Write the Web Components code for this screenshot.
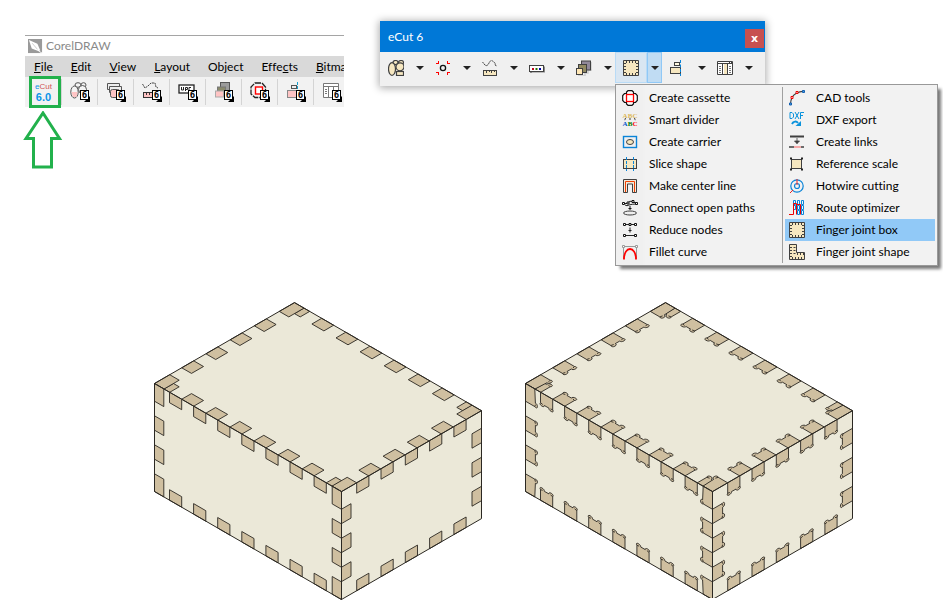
<!DOCTYPE html>
<html lang="en">
<head>
<meta charset="utf-8">
<title>eCut 6 finger joint box</title>
<style>
body{margin:0;background:#fff;color:#000;font:12px/16px Lato,"Open Sans",sans-serif;font-variant-ligatures:none}
</style>
</head>
<body>
<ecut-page></ecut-page>
<script>
const C='#f6e7c0', K='#404040', B='#0a84d8';
const ICONS={
 nest:`<g fill="${C}" stroke="${K}" stroke-width="1.2"><ellipse cx="7.5" cy="2.5" rx="2.5" ry="2"/><ellipse cx="13" cy="2.5" rx="2.5" ry="2"/><ellipse cx="4" cy="9" rx="3.5" ry="6.3"/><circle cx="12" cy="6.8" r="4"/><rect x="8.5" y="11.5" width="7" height="4"/></g>`,
 focus:`<path d="M1 3.5h2.5V1M12.500 1v2.500H15M1 12.500h2.500V15M15 12.500h-2.500V15" fill="none" stroke="red" shape-rendering="crispEdges"/><circle cx="8" cy="8" r="2.600" fill="none" stroke="#111" stroke-width="1.300"/>`,
 measure:`<path d="M.5 2L3 5Q5 7 7 3T11 1.500Q14 3 13 5L15 6" fill="none" stroke="${K}" stroke-dasharray="2 .6"/><rect x="1.500" y="10.500" width="13" height="5" fill="${C}" stroke="${K}"/><path d="M4.500 11v2M7.500 11v1M9.500 11v2M12.500 11v1" stroke="${K}"/>`,
 dots:`<path d="M2 13V11.500H15.500V6.500" fill="none" stroke="#888" stroke-width="2"/><rect x=".5" y="5.500" width="14" height="6" fill="#fff" stroke="${K}"/><path d="M3 8h2v2H3z" fill="#c00020"/><path d="M6.500 8h2v2h-2z" fill="#2a7000"/><path d="M10 8h2v2h-2z" fill="#00a"/>`,
 stack:`<path d="M2 16H9V13H12V10H16V2" fill="none" stroke="#ccc" stroke-width="1.500"/><rect x="5.500" y="1" width="9" height="9" fill="#91899a" stroke="${K}"/><rect x="2.500" y="4.500" width="8" height="8" fill="#918a62" stroke="${K}"/><rect x=".5" y="8.500" width="6" height="6" fill="#ffe7b5" stroke="${K}"/>`,
 finger:`<path d="M.5.5h15v15H.5z" fill="${C}" stroke="${K}"/><g fill="none" stroke="${K}" stroke-dasharray="1 2" stroke-width="2"><path d="M3 2H14M3 14H14M2 3V14M14 3V14"/></g>`,
 align:`<rect x="4.500" y="2.500" width="5" height="3" fill="#fff8e0" stroke="${K}"/><rect x=".5" y="7.500" width="10" height="6" fill="${C}" stroke="${K}"/><path d="M10.500 0V16" stroke="${B}" stroke-dasharray="3 1.500"/>`,
 table:`<path d="M.5 1.500h15v13H.5zM0 3.500h16M5.500 4v10M10.500 4v10" fill="#fff" stroke="${K}"/><path d="M7 4h3v10H7z" fill="${C}"/><path d="M12 2.500h3" stroke="${K}" stroke-dasharray="1 1"/><path d="M2 6.500h2M2 8.500h2M2 10.500h2M2 12.500h2M12 6.500h2M12 8.500h2M12 10.500h2M12 12.500h2" stroke="#777"/>`,
 cassette:`<path d="M4.500.7H11.500V4.500H15.300V11.500H11.500V15.300H4.500V11.500H.7V4.500H4.500z" fill="#fff"/><path d="M4.500 3.500V2L6 .7H10L11.500 2V3.500H13.500L15.300 5.500V10.500L13.500 12.500H11.500V14L10 15.300H6L4.500 14V12.500H2.500L.7 10.500V5.500L2.500 3.500z" fill="none" stroke="#111" stroke-width="1.200"/><rect x="4.500" y="4.500" width="7" height="7" fill="#fff" stroke="red" stroke-width="1.300"/>`,
 divider:`<g font-family="Liberation Serif,serif" font-weight="700" font-size="7" text-anchor="middle"><text x="3" y="5.500" fill="#dcb85c">A</text><text x="8" y="5.500" fill="#dcb85c">B</text><text x="13" y="5.500" fill="#dcb85c">C</text><text x="3" y="14" fill="#05c">A</text><text x="8" y="14" fill="#070">B</text><text x="13" y="14" fill="red">C</text></g><path d="M3.500 6L2.500 9M8 6V9M12.500 6L13.500 9" stroke="${K}" stroke-dasharray="2 1"/>`,
 carrier:`<rect x="1.500" y="2.500" width="13" height="11" fill="none" stroke="${B}" stroke-width="1.400"/><ellipse cx="8" cy="8" rx="3.500" ry="2.500" fill="${C}" stroke="${K}"/>`,
 slice:`<rect x="1.500" y="3.500" width="13" height="9" fill="${C}" stroke="${K}"/><path d="M4.500 1V15M11.500 1V15" stroke="${B}" stroke-dasharray="3 1"/>`,
 center:`<path d="M1.500 14.500V1.500H14.500V14.500H10.500V6H5.500V14.500z" fill="#f4e8d8" stroke="${K}"/><path d="M3.500 14V3.500H12.500V14" fill="none" stroke="#f04000"/>`,
 connect:`<path d="M1 3.500H5M11 2.500H15M5 3.500Q8 0 10.500 1.500M3 5Q5 6.500 7 5Q10 4 14 4" fill="none" stroke="#222"/><path d="M.5 2.500h2v2h-2zM5 2h2v2H5zM10 .5h2v2h-2zM13.500 2.500h2v2h-2z" fill="#fff" stroke="#111"/><path d="M8 6v4M6.500 8.500h3" stroke="#111"/><ellipse cx="8" cy="13" rx="6.500" ry="2" fill="#eee" stroke="${K}"/>`,
 reduce:`<path d="M2 2.500H14M2 13.500H14M8 5.500v5M6.500 8.500h3" stroke="#222"/><path d="M1.500 1.500h2v2h-2zM7 1.500h2v2H7zM12.500 1.500h2v2h-2zM1.500 12.500h2v2h-2zM12.500 12.500h2v2h-2z" fill="#fff" stroke="#111"/>`,
 fillet:`<path d="M1.500 15V2.500H14.500V15" fill="none" stroke="#999"/><path d="M.5 1.500h2v2h-2zM13.500 1.500h2v2h-2z" fill="#fff" stroke="#999"/><path d="M2 15.500C2 1.500 14 1.500 14 15.500" fill="none" stroke="red" stroke-width="1.800"/>`,
 cad:`<path d="M1.500 14Q2 6 7 3.500T15 1.500" fill="none" stroke="${K}" stroke-width="1.200"/><path d="M.5 13h2v2h-2zM13.500.5h2v2h-2z" fill="#4aa0e8" stroke="#1560b0"/><path d="M2 6.500h2v2H2zM7 1.500h2v2H7z" fill="#fff" stroke="#e00"/>`,
 dxf:`<path d="M1 .5V6.500H3L4.500 5V2L3 .5zM6 0L10 7M10 0L6 7M11.500 7V.5H15M11.500 3.500H14" fill="none" stroke="#0b93dc"/><path d="M3 12C4.500 9 7.500 9 9 11" fill="none" stroke="#0b93dc" stroke-width="2"/><path d="M12 9v5H6.500z" fill="#0b93dc"/>`,
 links:`<path d="M1 2.500H15" stroke="${K}" stroke-width="2"/><path d="M8 4v6M5.500 7h5L8 9.500z" fill="${K}" stroke="${K}" stroke-width=".8"/><path d="M0 13H5M12 13H15" stroke="${K}" stroke-width="1.600"/><path d="M5.500 13H12" stroke="#f33" stroke-width="1.500" stroke-dasharray="1 1"/>`,
 scale:`<rect x="2.500" y="3.500" width="10" height="9" fill="${C}" stroke="${K}"/><path d="M1 2.500h2M12 2.500h2M1 13.500h2M12 13.500h2" stroke="#222" stroke-width="2"/>`,
 hotwire:`<circle cx="8" cy="8" r="6.200" fill="none" stroke="${B}" stroke-width="1.200"/><circle cx="8" cy="8" r="2.500" fill="none" stroke="${B}" stroke-width="1.200"/><path d="M8 1V7M1 15L4 12" stroke="#e22"/>`,
 route:`<path d="M4.500.500h2v4h-2zM8.500.500h2v4h-2zM12.500.500h2v4h-2zM4.500 5.500h2v4h-2zM8.500 5.500h2v4h-2zM12.500 5.500h2v4h-2zM8.500 10.500h2v4h-2zM12.500 10.500h2v4h-2z" fill="#eff8ff" stroke="${B}"/><path d="M0 14.500H4.500V3.500H7.500V14.500M7.500 4.500H11.500V14.500" fill="none" stroke="#e00"/>`,
 shape:`<path d="M.5.5H7.500V8.500H15.500V15.500H.5z" fill="${C}" stroke="${K}"/><path d="M2 3V14M5.500 3V10M3 14H15M8 10H15" fill="none" stroke="${K}" stroke-width="2" stroke-dasharray="1 2"/>`,
 logo:`<path d="M0 0H15V15H0z" fill="#9a9a9a"/><path d="M1 1L10 5L13 12L11.500 13L4 10z" fill="#fff"/><path d="M4.500 4.500L10 11" stroke="#9a9a9a" stroke-width=".5"/><path d="M11.500 13L15 15" stroke="#fff"/>`
};
const P='#ffc4c4', badge=`<path d="M20 14v6h-6z" fill="#000"/><rect x="10.500" y="8.500" width="8" height="9" fill="#fff" stroke="#000"/><text x="14.500" y="16" text-anchor="middle" font-family="DejaVu Sans Mono,monospace" font-weight="700" font-size="9">6</text>`;
const CDR={
 nest:`<g fill="#f4f4f4" stroke="#555"><ellipse cx="8" cy="3" rx="3" ry="2.300"/><ellipse cx="13.500" cy="3" rx="2.500" ry="2.300"/><ellipse cx="4.500" cy="10" rx="3.700" ry="6"/><circle cx="12.500" cy="7.500" r="4"/></g><path d="M1.500 10h6l-1 5H3z" fill="${P}"/>`,
 copies:`<g fill="#eee" stroke="#555"><path d="M1.500 1.500h12v6h-12z"/><path d="M3.500 4.500h12v6h-12z"/><rect x="4.500" y="7.500" width="9" height="8" rx="2" fill="${P}"/></g>`,
 measure:`<path d="M.5 2L3 6L6 4L9 1L13 1L14 5L16 6" fill="none" stroke="#444" stroke-dasharray="2 .7"/><rect x="1.500" y="10.500" width="12" height="5" fill="${P}" stroke="#333"/><path d="M4.500 11v2M7.500 11v2" stroke="#333"/>`,
 vcc:`<rect x="1" y="3" width="15" height="8" fill="#fff" stroke="#222" stroke-width="1.300"/><path d="M3.500 5v3h2V5M7.500 9V5.500h2v2h-2M13 5.500h-2v3" fill="none" stroke="#222"/>`,
 stack:`<rect x="6.500" y=".5" width="9" height="9" fill="#9b9b9b" stroke="#555"/><rect x="3.500" y="5" width="8" height="7" fill="#89896a" stroke="#777"/><rect x="1.500" y="9" width="8" height="6" fill="${P}" stroke="#aaa"/>`,
 cassette:`<path d="M5 1H12L15.500 5V12L12 15.500H5L1 12V5z" fill="none" stroke="#222" stroke-width="1.300" stroke-dasharray="6 1"/><rect x="5.500" y="5" width="7" height="7" fill="#fff" stroke="red" stroke-width="1.400"/>`,
 align:`<rect x="5.500" y="3.500" width="5" height="3" fill="#eee" stroke="#555"/><rect x="1.500" y="8.500" width="10" height="7" fill="${P}" stroke="#888"/><path d="M11.500 0V16" stroke="#18a0d0" stroke-dasharray="3 1"/>`,
 table:`<path d="M1.500 1.500h15v14h-15zM1 4.500h16M6.500 4v11M11.500 4v11" fill="#fff" stroke="#777"/><path d="M3 7.500h2M3 9.500h2M3 11.500h2" stroke="#777"/>`
};
const define=(name,html,init)=>customElements.define(name,class extends HTMLElement{
  constructor(){super();const t=document.createElement('template');t.innerHTML=html;this.attachShadow({mode:'open'}).append(t.content.cloneNode(true));}
  connectedCallback(){if(init&&!this.ready){this.ready=true;init(this,this.shadowRoot);}}
});

define('ui-icon',`<style>:host{display:block;width:16px;height:16px;flex:none}:host([set=cdr]){width:20px;height:20px}svg{display:block;width:100%;height:100%}</style><svg aria-hidden="true"></svg>`,(h,r)=>{
  const cdr=h.getAttribute('set')==='cdr', s=r.querySelector('svg'), n=h.getAttribute('name');
  s.setAttribute('viewBox',cdr?'0 0 20 20':'0 0 16 16');
  s.innerHTML=cdr?CDR[n]+badge:ICONS[n];
});

define('cdr-window',`<style>
:host{display:block;overflow:hidden}
header{display:flex;align-items:center;gap:3px;height:20px;padding-left:3px;border-top:1px solid #a5a5a5;color:#8a8a8a;background:#fff}
header ui-icon{width:15px;height:15px}
nav{display:flex;gap:18px;height:21px;padding-left:9px;background:#d9d9d9;align-items:center}
button{font:inherit;color:inherit;border:0;padding:0;background:none;white-space:nowrap}
.bar{display:flex;height:30px;background:#f2f2f2;padding-left:1px}
.bar button{flex:0 0 36px;box-sizing:border-box;border-right:1px solid #d4d4d4;display:grid;place-items:center;margin:2px 0}
.brand{display:block;font:8px/9px "Liberation Sans",sans-serif;color:#d05555}
.brand span{display:block}
.brand i{color:#0a95e8;font-style:normal}
.brand b{display:block;color:#0a95e8;font:bold 11px/12px "Liberation Sans",sans-serif}
</style>
<header><ui-icon name="logo"></ui-icon><span>CorelDRAW</span></header>
<nav><button><u>F</u>ile</button><button><u>E</u>dit</button><button><u>V</u>iew</button><button><u>L</u>ayout</button><button>Ob<u>j</u>ect</button><button>Effe<u>c</u>ts</button><button><u>B</u>itmap</button></nav>
<div class="bar"><button><span class="brand"><span><i>e</i>Cut</span><b>6.0</b></span></button></div>`,(h,r)=>{
  const bar=r.querySelector('.bar');
  for(const n of ['nest','copies','measure','vcc','stack','cassette','align','table']){
    const b=document.createElement('button');b.setAttribute('aria-label',n);b.innerHTML=`<ui-icon set="cdr" name="${n}"></ui-icon>`;bar.append(b);
  }
});

define('callout-arrow',`<style>:host{display:block}.box{box-sizing:border-box;width:32px;height:32px;border:3px solid #22b14c;margin-left:6px}svg{display:block;width:40px;height:58px;margin-top:3px}</style>
<div class="box"></div><svg viewBox="0 0 40 58"><path d="M20 2L36.500 27.500H28.500V56H10.500V27.500H3z" fill="none" stroke="#22b14c" stroke-width="3"/></svg>`);

define('menu-entry',`<style>
:host{display:block}
button{display:flex;align-items:center;gap:11px;width:100%;height:22px;border:0;background:none;padding:0 4px;font:inherit;color:inherit;text-align:left;white-space:nowrap}
:host([active]) button{background:#91c9f7}
</style><button role="menuitem"><ui-icon></ui-icon><slot></slot></button>`,(h,r)=>{
  const i=document.createElement('ui-icon');i.setAttribute('name',h.getAttribute('icon'));r.querySelector('ui-icon').replaceWith(i);
});

define('drop-menu',`<style>
:host{display:grid;grid-template-columns:165px 150px;gap:2px;padding:2px;box-sizing:border-box;background:linear-gradient(90deg,#f0f0f0 26px,#f2f2f2 30px);border:1px solid #999;box-shadow:4px 4px 3px -1px #0008}
.l{border-right:1px solid #a0a0a0}
</style><div class="l"><slot name="left"></slot></div><div><slot></slot></div>`);

define('split-button',`<style>
:host{display:flex;position:relative;height:31px;flex:0 0 47px}
button{font:inherit;border:0;background:none;padding:0;display:grid;place-items:center;box-sizing:border-box}
.main{width:32px}.more{width:15px}
.more::before{content:"";border:4px solid transparent;border-top-color:#222;border-bottom:0}
:host([open]) .main{background:#d9e6f2;border:1px solid #b9dbf6}
:host([open]) .more{background:#c0dcf3;border:1px solid #90c8f6}
::slotted(drop-menu){position:absolute;left:0;top:32px;z-index:2}
</style><button class="main"><ui-icon></ui-icon></button><button class="more" aria-label="More"></button><slot></slot>`,(h,r)=>{
  const i=document.createElement('ui-icon');i.setAttribute('name',h.getAttribute('icon'));r.querySelector('ui-icon').replaceWith(i);
  r.querySelector('.main').setAttribute('aria-label',h.getAttribute('icon'));
});

define('tool-palette',`<style>
:host{display:block;background:#f0f0f0;box-shadow:0 1px 8px 1px #0005}
header{display:flex;align-items:center;justify-content:space-between;height:31px;padding:0 1px 0 8px;background:#0078d7;color:#fff}
header button{width:19px;height:19px;margin-top:4px;border:0;padding:0;background:#c75050;color:#fff;font:bold 11px/16px "DejaVu Sans",sans-serif}
.row{display:flex;height:34px}
</style><header><span>eCut 6</span><button aria-label="Close">x</button></header><div class="row"><slot></slot></div>`);

/* Isometric crate: 187 wide, 140 deep, 108 high, with joints along each edge. */
define('joint-box',`<style>:host{display:block}svg{display:block;width:100%;height:auto}</style><svg viewBox="0 0 336 298" role="img"></svg>`,(h,r)=>{
  const ears=h.hasAttribute('ears'), k=.578, L=[4.5,83.500], F=[191.500,191.500];
  const top=(u,v)=>[L[0]+u+v,L[1]+k*(u-v)], left=(u,z)=>[L[0]+u,L[1]+k*u+z], right=(v,z)=>[F[0]+v,F[1]-k*v+z];
  const f=p=>p.map(n=>n.toFixed(1)).join(' ');
  const poly=P=>`<path d="M${P.map(f).join('L')}Z" fill="#ebe8d8" stroke="none"/>`;
  let out='';
  out+=poly([top(0,0),top(187,0),top(187,140),top(0,140)])+poly([left(0,0),left(187,0),left(187,108),left(0,108)])+poly([right(0,0),right(140,0),right(140,108),right(0,108)]);
  /* a: start on edge, w: width along edge, q(s,d): edge distance and depth to a page point */
  const tooth=(a,w,d,q,m=3)=>{
    const g=(s,t)=>f(q(a+s,t));
    if(!ears){out+=`<path d="M${g(0,0)}L${g(0,d)}L${g(w,d)}L${g(w,0)}Z" fill="#cfbfa0"/>`;return;}
    const A=m&1?`L${g(0,d)}C${g(-1,d+1.200)} ${g(-.4,d+2.600)} ${g(1.400,d+2.600)}C${g(3.400,d+2.600)} ${g(4,d+1.500)} ${g(3.800,d+.6)}`:`L${g(0,d)}`;
    const Z=m&2?`L${g(w-3.800,d+.6)}C${g(w-4,d+1.500)} ${g(w-3.400,d+2.600)} ${g(w-1.400,d+2.600)}C${g(w+.4,d+2.600)} ${g(w+1,d+1.200)} ${g(w,d)}`:`L${g(w,d)}`;
    out+=`<path d="M${g(0,0)}${A}${Z}L${g(w,0)}Z" fill="#cfbfa0"/>`;
    if(m&1)out+=`<path d="M${g(0,d)}L${g(2.200,d+.6)}" fill="none"/>`;
    if(m&2)out+=`<path d="M${g(w,d)}L${g(w-2.200,d+.6)}" fill="none"/>`;
  };
  const each=(n,a,p,w,q)=>{for(let i=0;i<n;i++)tooth(a+i*p,w,9.800,q)};
  const tF=(s,d)=>top(s,d), tB=(s,d)=>top(s,140-d), tL=(s,d)=>top(d,s), tR=(s,d)=>top(187-d,s);
  each(6,27.200,24.100,12,tF);each(6,27.200,24.100,12,tB);each(4,27.200,24.200,12,tL);each(4,27.200,24.200,12,tR);
  tooth(9.500,5.700,9.500,tF,2);tooth(9.500,5.700,9.500,tB,2);tooth(171.800,6,9.500,tF,1);tooth(171.800,6,9.500,tB,1);
  tooth(0,15.200,9.500,tL,2);tooth(124.800,15.200,9.500,tL,1);tooth(0,15.200,9.500,tR,2);tooth(124.800,15.200,9.500,tR,1);
  const lT=(s,d)=>left(s,d), lB=(s,d)=>left(s,108-d), rT=(s,d)=>right(s,d), rB=(s,d)=>right(s,108-d);
  for(const q of [lT,lB])for(let i=0;i<7;i++)tooth(15+24.100*i,12.200,10.500,q);
  for(const q of [rT,rB])for(let i=0;i<5;i++)tooth(15.200+24.300*i,12.200,10.500,q);
  for(const q of [(s,d)=>left(d,s),(s,d)=>left(187-d,s)]){
    tooth(0,17.700,9.300,q,2);tooth(32.300,14.400,9.300,q);tooth(61.300,14.400,9.300,q);tooth(90.300,17.700,9.300,q,1);
  }
  for(const q of [(s,d)=>right(d,s),(s,d)=>right(140-d,s)])for(const a of [17.700,46.700,75.700])tooth(a,14.400,9.500,q);
  out+=`<path d="M${f(top(0,0))}L${f(top(0,140))}L${f(top(187,140))}L${f(right(140,108))}L${f(right(0,108))}L${f(left(0,108))}ZL${f(left(187,0))}L${f(right(140,0))}M${f(F)}V299.500" fill="none" stroke-width="1"/>`;
  const s=r.querySelector('svg');
  s.setAttribute('aria-label',ears?'Box with eared finger joints':'Box with plain finger joints');
  s.innerHTML=`<g stroke="#2b2822" stroke-width=".9" stroke-linejoin="round">${out}</g>`;
  if(!ears)s.setAttribute('viewBox','0 0 336 300');
});

define('ecut-page',`<style>
:host{display:block}
.top{display:grid;grid-template-columns:minmax(0,319fr) minmax(0,385fr) minmax(0,142fr);gap:36px;padding:21px 0 0 25px;height:281px;box-sizing:border-box;align-items:start}
.cdr{position:relative;padding-top:14px}
callout-arrow{position:absolute;left:-2px;top:55px}
.boxes{display:grid;grid-template-columns:1fr 1fr;gap:35px;padding:19px 86px 12px 150px;align-items:start}
</style>
<div class="top">
<div class="cdr"><cdr-window></cdr-window><callout-arrow></callout-arrow></div>
<tool-palette>
<split-button icon="nest"></split-button><split-button icon="focus"></split-button><split-button icon="measure"></split-button><split-button icon="dots"></split-button><split-button icon="stack"></split-button>
<split-button icon="finger" open><drop-menu role="menu">
<menu-entry slot="left" icon="cassette">Create cassette</menu-entry><menu-entry slot="left" icon="divider">Smart divider</menu-entry><menu-entry slot="left" icon="carrier">Create carrier</menu-entry><menu-entry slot="left" icon="slice">Slice shape</menu-entry><menu-entry slot="left" icon="center">Make center line</menu-entry><menu-entry slot="left" icon="connect">Connect open paths</menu-entry><menu-entry slot="left" icon="reduce">Reduce nodes</menu-entry><menu-entry slot="left" icon="fillet">Fillet curve</menu-entry>
<menu-entry icon="cad">CAD tools</menu-entry><menu-entry icon="dxf">DXF export</menu-entry><menu-entry icon="links">Create links</menu-entry><menu-entry icon="scale">Reference scale</menu-entry><menu-entry icon="hotwire">Hotwire cutting</menu-entry><menu-entry icon="route">Route optimizer</menu-entry><menu-entry icon="finger" active>Finger joint box</menu-entry><menu-entry icon="shape">Finger joint shape</menu-entry>
</drop-menu></split-button>
<split-button icon="align"></split-button><split-button icon="table"></split-button>
</tool-palette>
</div>
<div class="boxes"><joint-box></joint-box><joint-box ears></joint-box></div>`);
</script>
</body>
</html>
